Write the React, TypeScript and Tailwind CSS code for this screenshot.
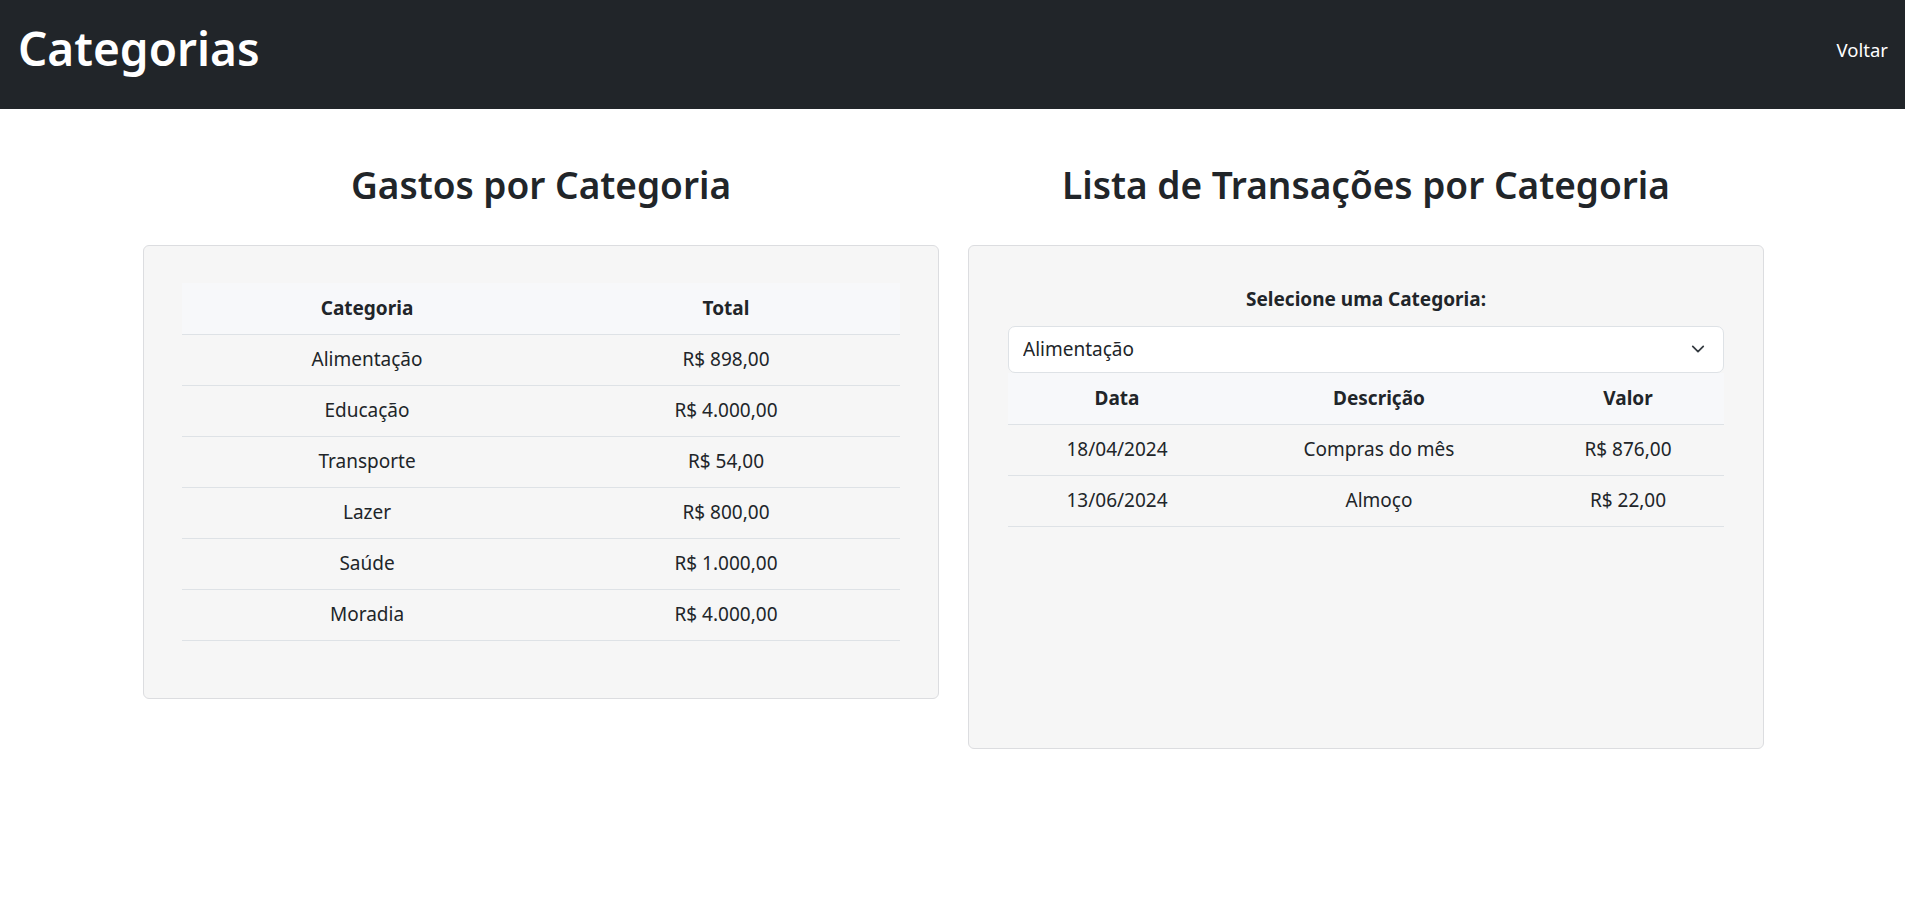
import { useState } from 'react';

const gastos = [
  { categoria: 'Alimentação', total: 'R$ 898,00' },
  { categoria: 'Educação', total: 'R$ 4.000,00' },
  { categoria: 'Transporte', total: 'R$ 54,00' },
  { categoria: 'Lazer', total: 'R$ 800,00' },
  { categoria: 'Saúde', total: 'R$ 1.000,00' },
  { categoria: 'Moradia', total: 'R$ 4.000,00' },
];

const transacoes: { [key: string]: { data: string; descricao: string; valor: string }[] } = {
  'Alimentação': [
    { data: '18/04/2024', descricao: 'Compras do mês', valor: 'R$ 876,00' },
    { data: '13/06/2024', descricao: 'Almoço', valor: 'R$ 22,00' },
  ],
};

const App = () => {
  const [categoria, setCategoria] = useState('Alimentação');
  const lista = transacoes[categoria] ?? [];

  return (
    <div className="min-h-screen bg-white text-[#212529]" style={{ fontFamily: '"Noto Sans", sans-serif' }}>
      {/* Navbar */}
      <header className="h-[109px] bg-[#212529] flex items-center justify-between pl-[18px] pr-[17px]">
        <h1 className="text-[46px] font-semibold text-white leading-none pb-[14px]">Categorias</h1>
        <a className="text-[18.5px] text-white cursor-pointer pb-[9px]">Voltar</a>
      </header>

      <main className="flex gap-[29px] pl-[143px] mt-[52px]">
        {/* Gastos por Categoria */}
        <section className="w-[796px]">
          <h2 className="text-[37px] font-semibold text-center leading-[48px] mb-[36px]">Gastos por Categoria</h2>
          <div className="bg-[#f6f6f6] border border-[#dcdde0] rounded-[6px] pt-[37px] px-[38px] pb-[57px]">
            <table className="w-full border-collapse text-[19px]">
              <thead>
                <tr className="bg-[#f7f8fa] border-b border-[#dee2e6]">
                  <th className="w-[370px] h-[51px] font-bold">Categoria</th>
                  <th className="h-[51px] font-bold">Total</th>
                </tr>
              </thead>
              <tbody>
                {gastos.map((g) => (
                  <tr key={g.categoria} className="border-b border-[#dee2e6]">
                    <td className="h-[51px] text-center">{g.categoria}</td>
                    <td className="h-[51px] text-center">{g.total}</td>
                  </tr>
                ))}
              </tbody>
            </table>
          </div>
        </section>

        {/* Lista de Transações */}
        <section className="w-[796px]">
          <h2 className="text-[37px] font-semibold text-center leading-[48px] mb-[36px]">Lista de Transações por Categoria</h2>
          <div className="bg-[#f6f6f6] border border-[#dcdde0] rounded-[6px] h-[504px] pt-[38px] px-[39px]">
            <label className="block text-center text-[19px] font-bold leading-[30px] mb-[12px]">Selecione uma Categoria:</label>
            <div className="relative">
              <select
                value={categoria}
                onChange={(e) => setCategoria(e.target.value)}
                className="w-full h-[47px] appearance-none bg-white border border-[#dee2e6] rounded-[7px] pl-[14px] text-[19px] outline-none"
              >
                {gastos.map((g) => (
                  <option key={g.categoria} value={g.categoria}>{g.categoria}</option>
                ))}
              </select>
              <svg className="absolute right-[19px] top-[18px] pointer-events-none" width="14" height="10" viewBox="0 0 16 10" fill="none">
                <path d="M2 2l6 6 6-6" stroke="#343a40" strokeWidth="2" strokeLinecap="round" strokeLinejoin="round" />
              </svg>
            </div>
            <table className="w-full border-collapse text-[19px]">
              <thead>
                <tr className="bg-[#f7f8fa] border-b border-[#dee2e6]">
                  <th className="w-[218px] h-[51px] font-bold">Data</th>
                  <th className="w-[306px] h-[51px] font-bold">Descrição</th>
                  <th className="h-[51px] font-bold">Valor</th>
                </tr>
              </thead>
              <tbody>
                {lista.map((t) => (
                  <tr key={t.data} className="border-b border-[#dee2e6]">
                    <td className="h-[51px] text-center">{t.data}</td>
                    <td className="h-[51px] text-center">{t.descricao}</td>
                    <td className="h-[51px] text-center">{t.valor}</td>
                  </tr>
                ))}
              </tbody>
            </table>
          </div>
        </section>
      </main>
    </div>
  );
};

export default App;
